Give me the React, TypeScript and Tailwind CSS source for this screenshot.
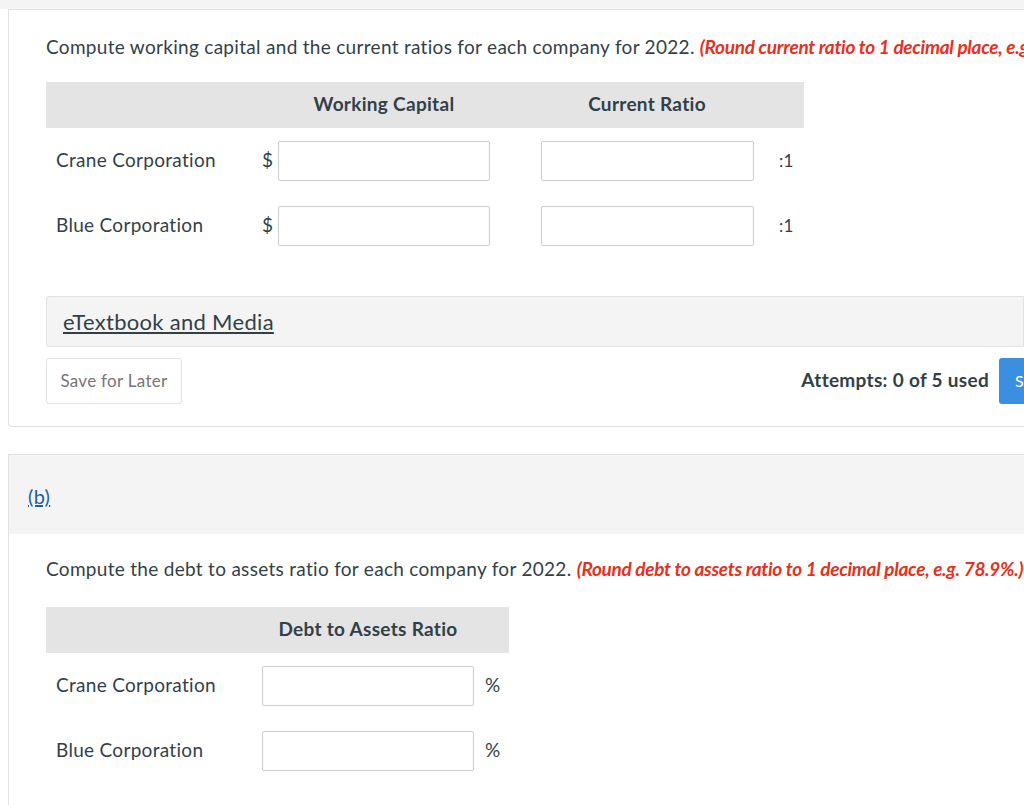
export default function App() {
  const f = { fontFamily: "Lato, 'Liberation Sans', sans-serif" };
  const input = "h-[40px] border border-[#cccccc] bg-white rounded-[2px]";
  return (
    <div style={f} className="w-[1024px] h-[805px] overflow-hidden bg-white text-[#333f48] tracking-[0.3px]">
      <div className="h-[9px] bg-[#f4f4f4]" />
      <div className="ml-[8px] border-l border-t border-b border-[#e2e2e2] rounded-bl-[4px] h-[418px] pl-[37px] overflow-hidden">
        <p className="mt-[23px] text-[19px] whitespace-nowrap">
          Compute working capital and the current ratios for each company for 2022.{" "}
          <span className="text-[#e7301d] italic font-bold tracking-[-0.3px]">(Round current ratio to 1 decimal place, e.g. 1.5:1)</span>
        </p>
        <div className="mt-[20px] w-[758px] h-[46px] bg-[#e4e4e4] flex items-center text-[19px] font-bold">
          <div className="w-[232px]" />
          <div className="w-[212px] text-center">Working Capital</div>
          <div className="w-[51px]" />
          <div className="w-[212px] text-center">Current Ratio</div>
        </div>
        {["Crane Corporation", "Blue Corporation"].map((n, i) => (
          <div key={n} className={`flex items-center text-[19px] ${i === 0 ? "mt-[13px]" : "mt-[25px]"}`}>
            <div className="w-[200px] pl-[10px] whitespace-nowrap">{n}</div>
            <div className="w-[32px] pl-[16px]">$</div>
            <div className={`${input} w-[212px]`} />
            <div className={`${input} w-[213px] ml-[51px]`} />
            <div className="ml-[25px] text-[17px]">:1</div>
          </div>
        ))}
        <div className="mt-[50px] h-[51px] bg-[#f4f4f4] border border-[#e2e2e2] rounded-l-[3px] flex items-center pl-[16px] text-[22px]">
          <span className="underline underline-offset-2">eTextbook and Media</span>
        </div>
        <div className="mt-[11px] flex items-center">
          <div className="w-[136px] h-[46px] border border-[#e2e2e2] rounded-[3px] flex items-center justify-center text-[17px] text-[#757575]">Save for Later</div>
          <div className="ml-auto text-[19px] font-bold mr-[10px] whitespace-nowrap">Attempts: 0 of 5 used</div>
          <div className="w-[25px] h-[46px] bg-[#3b8fe0] rounded-l-[3px] text-white text-[16px] flex items-center pl-[16px] overflow-hidden">S</div>
        </div>
      </div>
      <div className="h-[27px]" />
      <div className="ml-[8px] border-l border-t border-[#e2e2e2] h-[360px] overflow-hidden">
        <div className="h-[79px] bg-[#f4f4f4] flex items-center pl-[19px] pt-[2px] text-[20px] text-[#1d5f9e]">
          <span className="underline">(b)</span>
        </div>
        <div className="pl-[37px]">
          <p className="mt-[21px] text-[19px] whitespace-nowrap">
            Compute the debt to assets ratio for each company for 2022.{" "}
            <span className="text-[#e7301d] italic font-bold tracking-[-0.3px]">(Round debt to assets ratio to 1 decimal place, e.g. 78.9%.)</span>
          </p>
          <div className="mt-[23px] w-[463px] h-[46px] bg-[#e4e4e4] flex items-center text-[19px] font-bold">
            <div className="w-[216px]" />
            <div className="w-[212px] text-center whitespace-nowrap">Debt to Assets Ratio</div>
          </div>
          {["Crane Corporation", "Blue Corporation"].map((n, i) => (
            <div key={n} className={`flex items-center text-[19px] ${i === 0 ? "mt-[13px]" : "mt-[25px]"}`}>
              <div className="w-[216px] pl-[10px] whitespace-nowrap">{n}</div>
              <div className={`${input} w-[212px]`} />
              <div className="ml-[11px]">%</div>
            </div>
          ))}
        </div>
      </div>
    </div>
  );
}
